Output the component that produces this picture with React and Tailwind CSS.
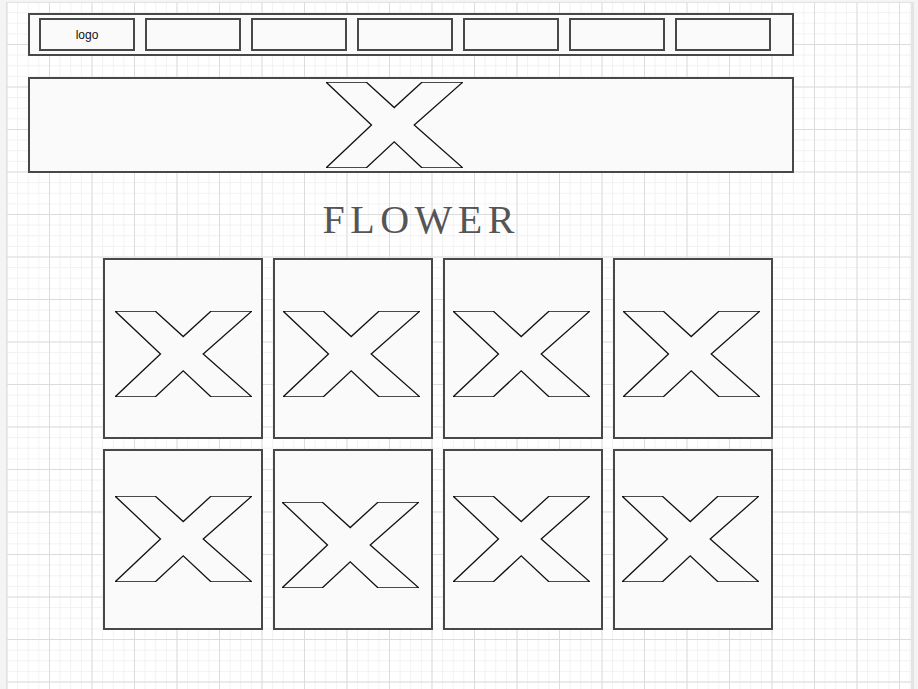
const XMark = ({ className }) => (
  <svg
    className={className}
    viewBox="0 0 100 100"
    preserveAspectRatio="none"
    fill="none"
  >
    <polygon
      points="0,0 29.3,0 49.8,29.7 70.2,0 100,0 64.4,50 100,100 70.2,100 49.8,69.5 29.3,100 0,100 33.2,50"
      stroke="#111"
      strokeWidth="1.3"
      strokeLinejoin="miter"
      vectorEffect="non-scaling-stroke"
    />
  </svg>
);

const navItems = ["logo", "", "", "", "", "", ""];

// where the X sits inside each card (measured from the picture)
const cards = [
  "ml-[10px] mt-[51px]",
  "ml-[8px] mt-[51px]",
  "ml-[8px] mt-[51px]",
  "ml-[8px] mt-[51px]",
  "ml-[10px] mt-[45px]",
  "ml-[7px] mt-[51px]",
  "ml-[8px] mt-[45px]",
  "ml-[7px] mt-[45px]",
];

const App = () => {
  return (
    <div className="w-[918px] h-[689px] overflow-hidden bg-[#f4f4f4] pl-[6px] pt-[2px] font-['Liberation_Sans',Arial,sans-serif]">
      {/* canvas */}
      <div className="w-[908px] h-[700px] bg-white border-l border-t border-[#e2e2e2] border-r-[3px] border-r-[#e4e4e4] [background-image:linear-gradient(to_right,#dcdcdc_1px,transparent_1px),linear-gradient(to_bottom,#dcdcdc_1px,transparent_1px),linear-gradient(to_right,#f2f2f2_1px,transparent_1px),linear-gradient(to_bottom,#f2f2f2_1px,transparent_1px)] [background-size:42.5px_42.5px,42.5px_42.5px,10.625px_10.625px,10.625px_10.625px] [background-position:-0.5px_-1.5px]">
        <div className="pl-[21px] pt-[10px]">
          {/* nav */}
          <div className="w-[766px] h-[43px] border-2 border-[#484848] bg-[#fafafa] flex items-center gap-[10px] pl-[9px]">
            {navItems.map((label, i) => (
              <div
                key={i}
                className="w-[96px] h-[33px] border-2 border-[#484848] bg-[#fafafa] flex items-center justify-center text-[12px] text-[#111]"
              >
                {label}
              </div>
            ))}
          </div>

          {/* banner */}
          <div className="mt-[21px] w-[766px] h-[96px] border-2 border-[#484848] bg-[#fafafa]">
            <XMark className="block ml-[296px] mt-[3px] w-[137px] h-[86px]" />
          </div>

          {/* title */}
          <div className="mt-[27px] ml-[294.5px] h-[40px] leading-none text-[40px] tracking-[5.5px] text-[#555] font-['Liberation_Serif','Times_New_Roman',serif]">
            FLOWER
          </div>

          {/* cards */}
          <div className="mt-[17.5px] ml-[75px] grid grid-cols-[repeat(4,160px)] gap-x-[10px] gap-y-[10px]">
            {cards.map((pos, i) => (
              <div
                key={i}
                className="h-[181px] border-2 border-[#484848] bg-[#fafafa]"
              >
                <XMark className={`block w-[137px] h-[86px] ${pos}`} />
              </div>
            ))}
          </div>
        </div>
      </div>
    </div>
  );
};

export default App;
